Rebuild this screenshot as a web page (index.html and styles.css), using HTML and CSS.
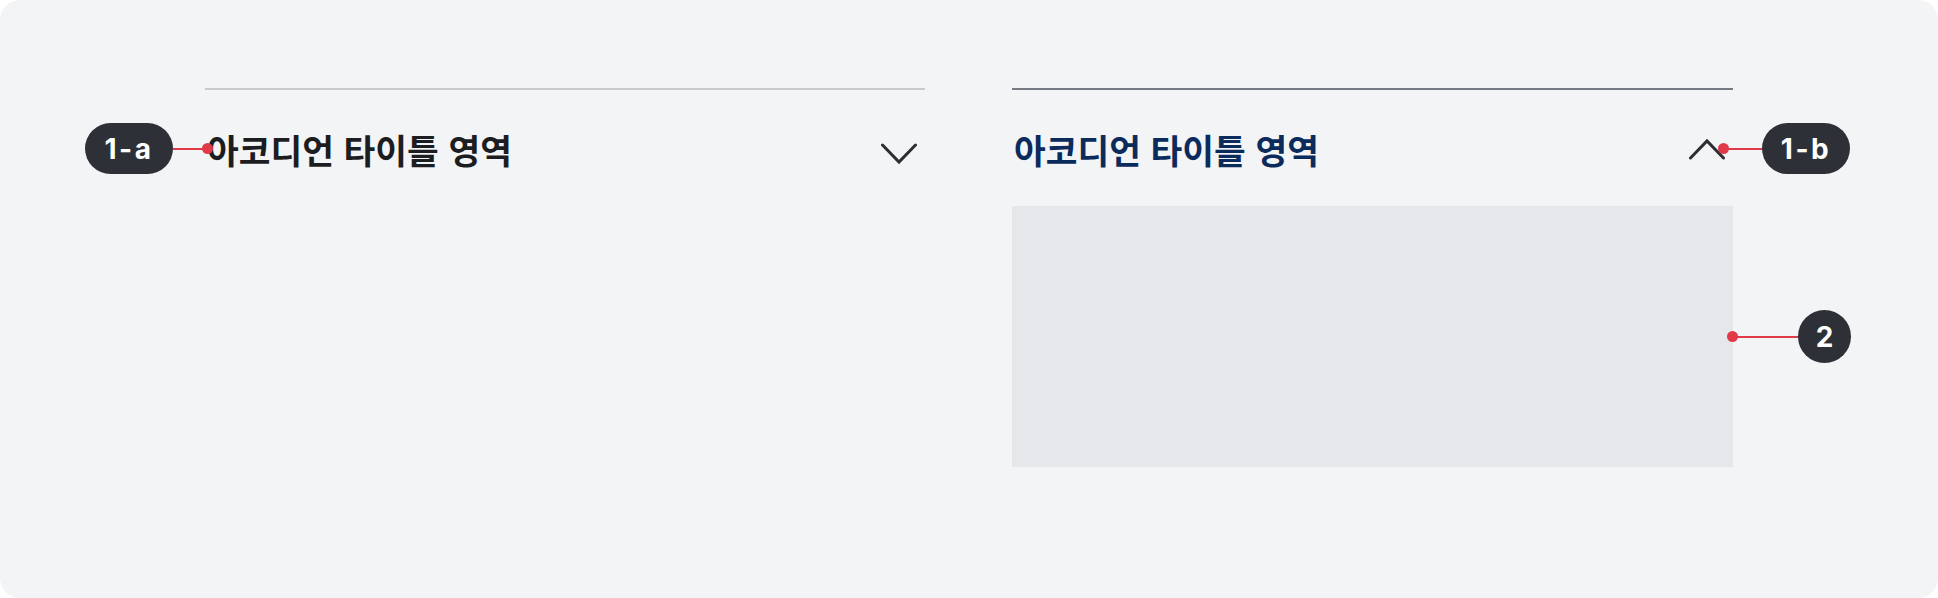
FILE: index.html
```html
<!DOCTYPE html>
<html lang="ko">
<head>
<meta charset="utf-8">
<title>Accordion</title>
<link rel="stylesheet" href="styles.css">
</head>
<body>
<div class="board">
  <div class="columns">
    <section class="accordion">
      <div class="acc-head">
        <span class="acc-title">아코디언 타이틀 영역</span>
        <svg class="chevron down" width="36" height="22" viewBox="0 0 36 22" aria-hidden="true">
          <polyline points="1.5,2 18,19 34.5,2" fill="none" stroke="#2c2e33" stroke-width="3" stroke-linecap="round" stroke-linejoin="miter"/>
        </svg>
      </div>
    </section>
    <section class="accordion open">
      <div class="acc-head">
        <span class="acc-title">아코디언 타이틀 영역</span>
        <svg class="chevron up" width="36" height="22" viewBox="0 0 36 22" aria-hidden="true">
          <polyline points="1.5,20 18,3 34.5,20" fill="none" stroke="#2c2e33" stroke-width="3" stroke-linecap="round" stroke-linejoin="miter"/>
        </svg>
      </div>
      <div class="acc-body"></div>
    </section>
  </div>

  <!-- callouts -->
  <div class="callout c-1a">
    <span class="tag">1-a</span>
    <span class="lead" style="width:30px"></span>
    <span class="dot"></span>
  </div>
  <div class="callout c-1b">
    <span class="dot"></span>
    <span class="lead" style="width:34px"></span>
    <span class="tag">1-b</span>
  </div>
  <div class="callout c-2">
    <span class="dot"></span>
    <span class="lead" style="width:61px"></span>
    <span class="tag round">2</span>
  </div>
</div>
</body>
</html>
```

FILE: styles.css
```css
* { box-sizing: border-box; }

html, body {
  margin: 0;
  padding: 0;
  background: #ffffff;
}

.board {
  position: relative;
  width: 1938px;
  height: 598px;
  background: #f3f4f6;
  border-radius: 20px;
  padding: 88px 0 0 205px;
  font-family: "Noto Sans CJK KR", "Noto Sans", sans-serif;
}

.columns {
  display: flex;
  gap: 87px;
  align-items: flex-start;
}

.accordion {
  width: 720px;
  border-top: 2px solid #c9cacd;
}

.accordion.open {
  width: 721px;
  border-top-color: #767b83;
}

.acc-head {
  height: 116px;
  display: flex;
  align-items: center;
  justify-content: space-between;
  padding: 2px 8px 0 2px;
}

.acc-title {
  font-size: 34.5px;
  font-weight: 700;
  color: #1c1d20;
  line-height: 1;
}

.open .acc-title {
  color: #0b2b5d;
}

.chevron { display: block; }
.chevron.down { margin-top: 10px; }
.chevron.up { margin-top: 0; }

.acc-body {
  height: 261px;
  background: #e6e7ea;
}

/* annotation callouts */
.callout {
  position: absolute;
  display: flex;
  align-items: center;
}

.c-1a { left: 85px; top: 123px; }
.c-1b { left: 1719px; top: 123px; }
.c-2  { left: 1728px; top: 310px; }

.tag {
  height: 51px;
  min-width: 88px;
  padding: 0 16px;
  border-radius: 26px;
  background: #2e3037;
  color: #ffffff;
  font-family: "Inter", "Liberation Sans", sans-serif;
  font-weight: 700;
  font-size: 28px;
  display: flex;
  align-items: center;
  justify-content: center;
  letter-spacing: 2.5px;
}

.tag.round {
  width: 53px;
  height: 53px;
  min-width: 53px;
  padding: 0;
  border-radius: 50%;
  letter-spacing: 0;
}

.lead {
  height: 2px;
  background: #e03a48;
}

.dot {
  width: 11px;
  height: 11px;
  border-radius: 50%;
  background: #e03a48;
  margin: 0 -1px;
}
```
